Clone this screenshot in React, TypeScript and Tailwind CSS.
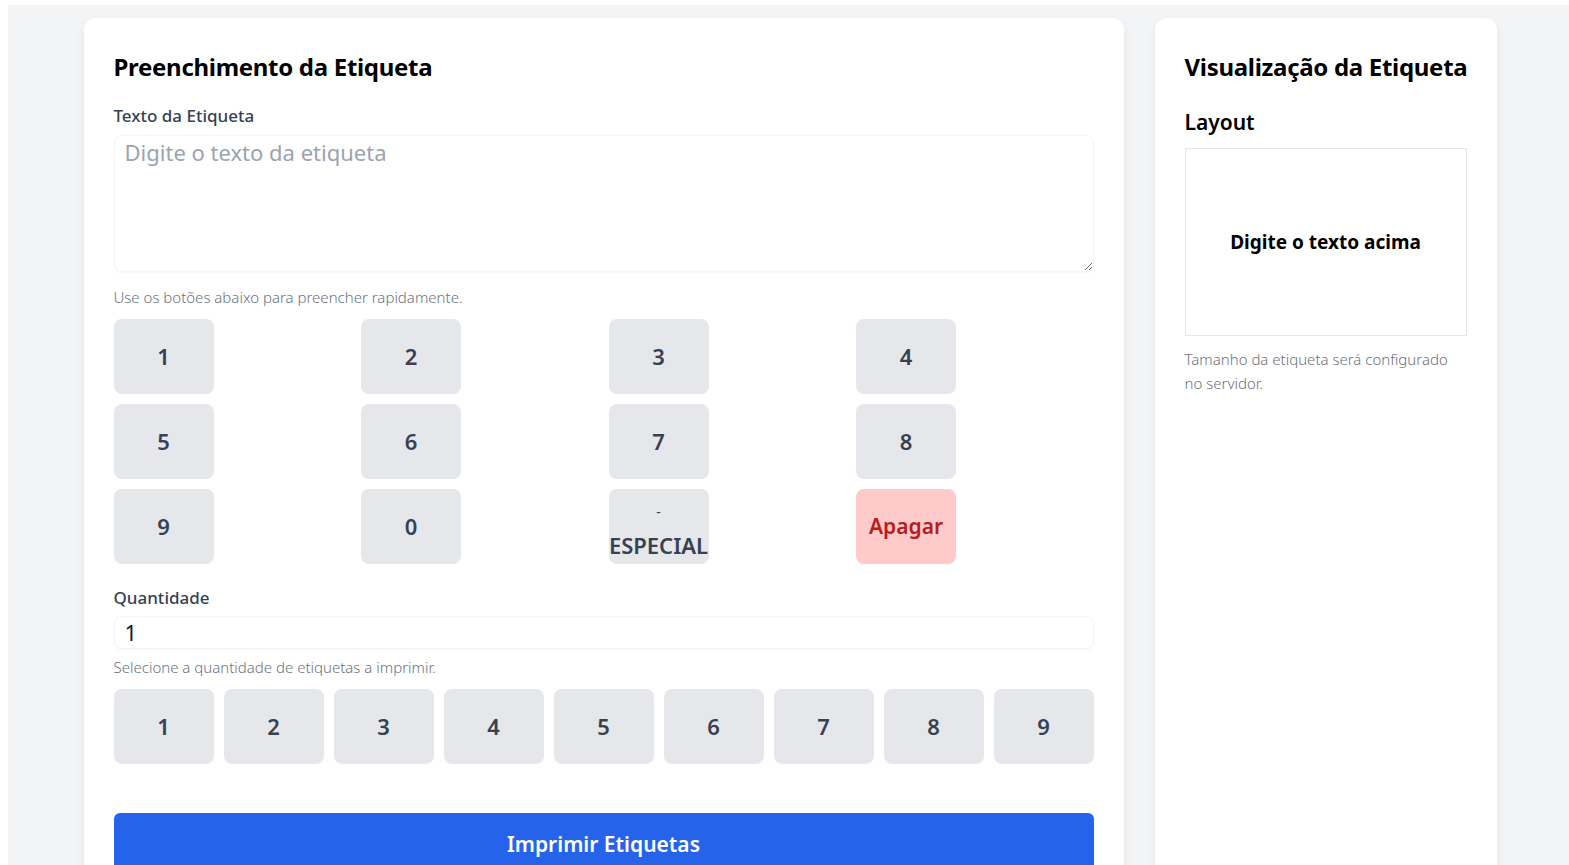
import { useState } from 'react';

const keys = ['1', '2', '3', '4', '5', '6', '7', '8', '9', '0'];
const quantities = ['1', '2', '3', '4', '5', '6', '7', '8', '9'];

export default function App() {
    const [text, setText] = useState('');
    const [qty, setQty] = useState('1');

    return (
        <div className="min-h-screen bg-white pl-2 pt-[5px] font-['Noto_Sans',sans-serif]">
            <div className="min-h-[860px] bg-[#f3f4f6] pt-[13px]">
                <div className="flex justify-center gap-[31px] pl-[3px]">
                    {/* Form card */}
                    <div className="w-[1040px] rounded-xl bg-white p-[30px] shadow-[0_4px_10px_rgba(0,0,0,0.06)]">
                        <h2 className="whitespace-nowrap text-[24px] leading-[38px] font-bold tracking-[-0.3px] text-black">Preenchimento da Etiqueta</h2>

                        <label className="mt-[18px] block text-[17px] leading-6 font-medium text-[#374151]">Texto da Etiqueta</label>
                        <textarea
                            value={text}
                            onChange={(e) => setText(e.target.value)}
                            placeholder="Digite o texto da etiqueta"
                            className="mt-[7px] block h-[137px] w-full rounded-lg border border-[#f5f5f6] px-[10px] pt-0 pb-[2px] text-[22px] text-[#111827] shadow-[0_1px_2px_rgba(0,0,0,0.04)] outline-none placeholder:text-[#9ca3af]"
                        />
                        <p className="mt-[15px] text-[15px] leading-5 font-light text-[#6b7280]">Use os botões abaixo para preencher rapidamente.</p>

                        <div className="mt-[12px] grid grid-cols-4 gap-[10px]">
                            {keys.map((k) => (
                                <button
                                    key={k}
                                    onClick={() => setText(text + k)}
                                    className="h-[75px] w-[100px] rounded-lg bg-[#e5e7eb] text-[22px] font-semibold text-[#374151]"
                                >
                                    {k}
                                </button>
                            ))}
                            <button
                                onClick={() => setText(text + '-')}
                                className="flex h-[75px] w-[100px] flex-col items-center justify-center rounded-lg bg-[#e5e7eb] pt-[10px] text-[22px] font-semibold text-[#374151]"
                            >
                                <span className="text-sm leading-4 font-normal">-</span>
                                <span className="mt-[11px] whitespace-nowrap leading-7">ESPECIAL</span>
                            </button>
                            <button
                                onClick={() => setText(text.slice(0, -1))}
                                className="h-[75px] w-[100px] rounded-lg bg-[#fecaca] text-[21px] font-semibold text-[#b91c1c]"
                            >
                                Apagar
                            </button>
                        </div>

                        <label className="mt-[22px] block text-[17px] leading-6 font-medium text-[#374151]">Quantidade</label>
                        <input
                            value={qty}
                            onChange={(e) => setQty(e.target.value)}
                            className="mt-[6px] block h-[33px] w-full rounded-lg border border-[#f5f5f6] px-[10px] text-[22px] text-[#111827] shadow-[0_1px_2px_rgba(0,0,0,0.04)] outline-none"
                        />
                        <p className="mt-[8px] text-[15px] leading-5 font-light text-[#6b7280]">Selecione a quantidade de etiquetas a imprimir.</p>

                        <div className="mt-[12px] flex gap-[10px]">
                            {quantities.map((q) => (
                                <button
                                    key={q}
                                    onClick={() => setQty(q)}
                                    className="h-[75px] w-[100px] rounded-lg bg-[#e5e7eb] text-[22px] font-semibold text-[#374151]"
                                >
                                    {q}
                                </button>
                            ))}
                        </div>

                        <button className="mt-[49px] h-[64px] w-full rounded-md bg-[#2563eb] text-[21px] font-semibold text-white">
                            Imprimir Etiquetas
                        </button>
                    </div>

                    {/* Preview card */}
                    <div className="min-h-[860px] w-[342px] self-start rounded-xl bg-white p-[30px] shadow-[0_4px_10px_rgba(0,0,0,0.06)]">
                        <h2 className="whitespace-nowrap text-[24px] leading-[38px] font-bold tracking-[-0.3px] text-black">Visualização da Etiqueta</h2>
                        <h3 className="mt-[22px] text-[21px] leading-7 font-semibold text-black">Layout</h3>
                        <div className="mt-[12px] flex h-[188px] items-center justify-center border border-[#e5e7eb]">
                            <span className="text-[19px] font-bold text-black">Digite o texto acima</span>
                        </div>
                        <p className="mt-[11px] text-[15px] leading-6 font-light text-[#6b7280]">
                            Tamanho da etiqueta será configurado no servidor.
                        </p>
                    </div>
                </div>
            </div>
        </div>
    );
}
